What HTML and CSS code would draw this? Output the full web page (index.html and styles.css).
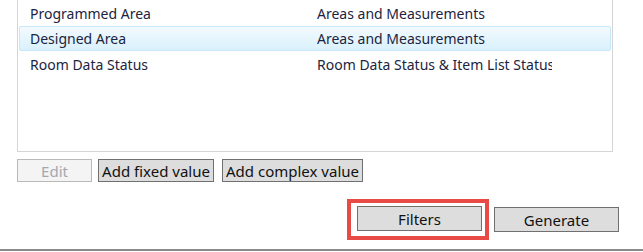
FILE: index.html
```html
<!DOCTYPE html>
<html>
	<head>
		<meta charset="utf-8"/>
		<title>Schedule values</title>
		<link rel="stylesheet" href="styles.css">
	</head>
	<body>
	<div class="panel">
		<div class="valueList">
			<div class="row">
				<span class="name">Programmed Area</span>
				<span class="group">Areas and Measurements</span>
			</div>
			<div class="row selected">
				<span class="name">Designed Area</span>
				<span class="group">Areas and Measurements</span>
			</div>
			<div class="row">
				<span class="name">Room Data Status</span>
				<span class="group">Room Data Status &amp; Item List Status</span>
			</div>
		</div>

		<div class="listButtons">
			<button type="button" class="btn btnEdit" disabled>Edit</button>
			<button type="button" class="btn btnFixed">Add fixed value</button>
			<button type="button" class="btn btnComplex">Add complex value</button>
		</div>

		<div class="footer">
			<div class="highlight">
				<button type="button" class="btn btnBig">Filters</button>
			</div>
			<button type="button" class="btn btnBig">Generate</button>
		</div>
	</div>
	<div class="bottomLine"></div>
	</body>
</html>
```

FILE: styles.css
```css
body{padding:0; margin:0; background:#fff; font-family:"Noto Sans","Open Sans",sans-serif; color:#1b2440;}
.panel{height:249px; overflow:hidden;}
.valueList{margin-left:17px; width:594px; height:151px; border:1px solid #d5d5d5; border-top:none; overflow:hidden;}
.row{display:flex; height:26px; align-items:center; font-size:14px; padding-left:11px; box-sizing:border-box; margin:0 1px;}
.row .name{width:287px; flex:none; white-space:nowrap;}
.row .group{width:235px; flex:none; white-space:nowrap; overflow:hidden;}
.row.selected{background:linear-gradient(#f3fafe,#d9f1fc); border:1px solid #c6e8f8; border-radius:2px; padding-left:10px; height:25px;}
.listButtons{display:flex; margin:7px 0 0 17px; height:23px;}
.btn{font-family:inherit; font-size:15px; color:#111; background:#dddddd; border:1px solid #707070; padding:0; margin:0; height:23px; line-height:20px;}
.btnEdit{width:75px; background:#f4f4f4; border-color:#b9b9b9; color:#a3a8b0;}
.btnFixed{width:116px; margin-left:6px;}
.btnComplex{width:141px; margin-left:8px;}
.footer{display:flex; align-items:flex-start; justify-content:flex-end; margin-top:17px; padding-right:24px;}
.highlight{display:flex; border:4px solid #e84a45; padding:3px 3px 5px 6px; margin-right:5px;}
.footer > .btnBig{margin-top:8px;}
.btnBig{width:125px; height:25px; line-height:22px;}
.bottomLine{height:2px; background:#8a8a8a;}
```
